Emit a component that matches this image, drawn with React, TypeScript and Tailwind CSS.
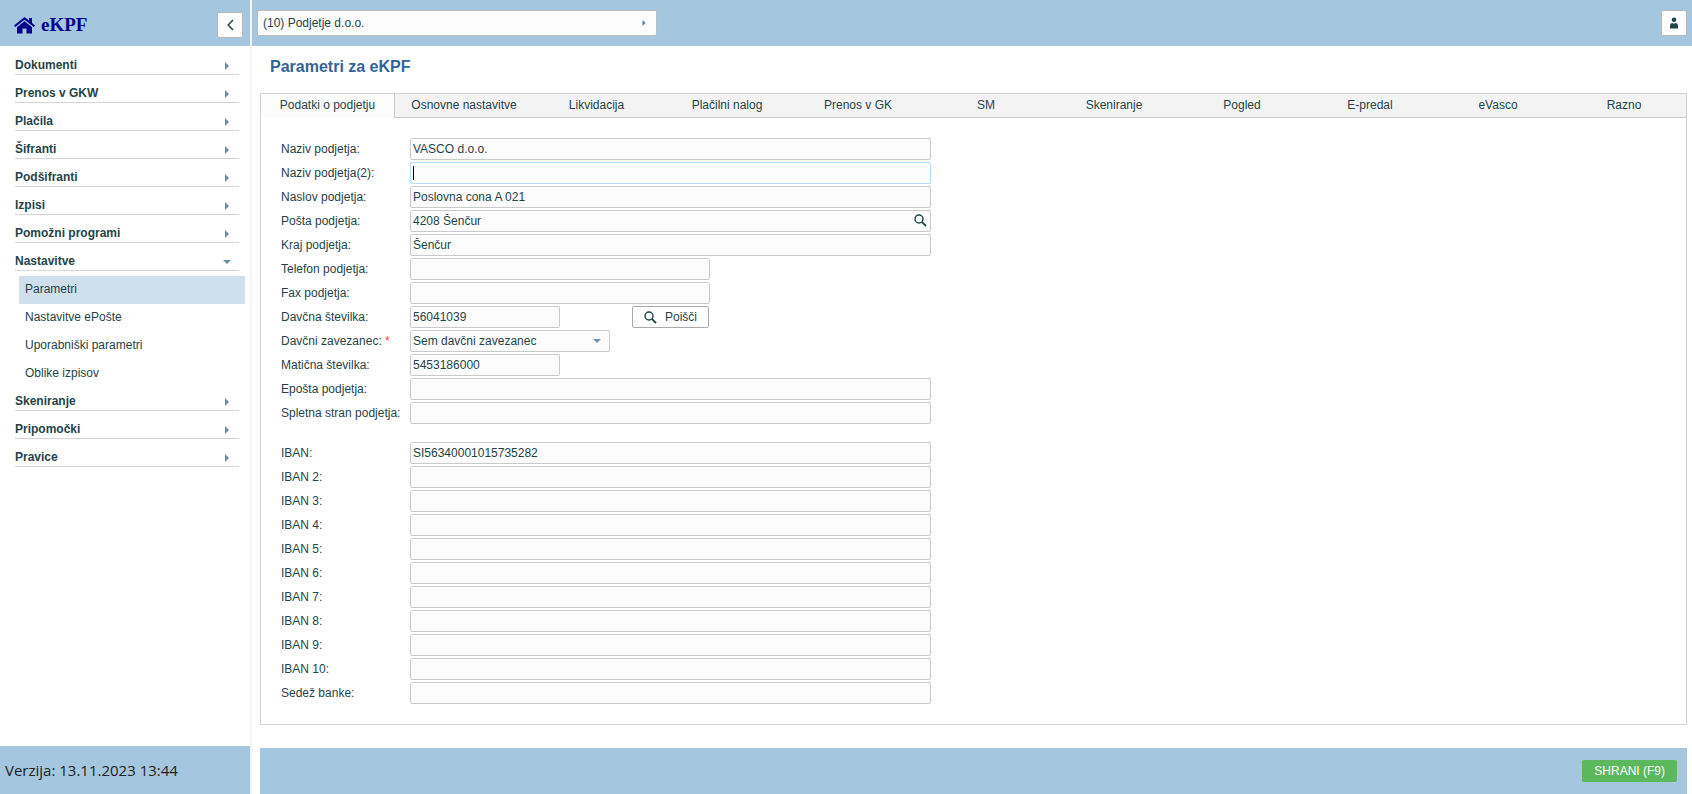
import { type ReactNode } from 'react';

type MenuItem = { label: string; children?: string[] };

const menu: MenuItem[] = [
  { label: 'Dokumenti' },
  { label: 'Prenos v GKW' },
  { label: 'Plačila' },
  { label: 'Šifranti' },
  { label: 'Podšifranti' },
  { label: 'Izpisi' },
  { label: 'Pomožni programi' },
  {
    label: 'Nastavitve',
    children: ['Parametri', 'Nastavitve ePošte', 'Uporabniški parametri', 'Oblike izpisov'],
  },
  { label: 'Skeniranje' },
  { label: 'Pripomočki' },
  { label: 'Pravice' },
];

const tabs = [
  'Podatki o podjetju',
  'Osnovne nastavitve',
  'Likvidacija',
  'Plačilni nalog',
  'Prenos v GK',
  'SM',
  'Skeniranje',
  'Pogled',
  'E-predal',
  'eVasco',
  'Razno',
];

const ibans = [2, 3, 4, 5, 6, 7, 8, 9, 10];

function HomeIcon() {
  return (
    <svg width="21" height="17" viewBox="0 0 21 17" fill="currentColor" aria-hidden="true">
      <path d="M10.5 0 L15 3.6 V1 H18 V6 L21 8.5 L19.7 10 L10.5 2.7 L1.3 10 L0 8.5 Z" />
      <path d="M10.5 4.2 L18 10.2 V16.5 H12.5 V11.5 H8.5 V16.5 H3 V10.2 Z" />
    </svg>
  );
}

function CaretRight({ className = '' }: { className?: string }) {
  return (
    <svg className={className} width="4" height="8" viewBox="0 0 4 8" aria-hidden="true">
      <path d="M0 0 L4 4 L0 8 Z" fill="currentColor" />
    </svg>
  );
}

function CaretDown({ className = '' }: { className?: string }) {
  return (
    <svg className={className} width="8" height="4" viewBox="0 0 8 4" aria-hidden="true">
      <path d="M0 0 H8 L4 4 Z" fill="currentColor" />
    </svg>
  );
}

function SearchIcon() {
  return (
    <svg width="13" height="13" viewBox="0 0 13 13" fill="none" stroke="currentColor" aria-hidden="true">
      <circle cx="5" cy="5" r="4" strokeWidth="1.4" />
      <path d="M7.8 7.8 L12 12" strokeWidth="1.8" />
    </svg>
  );
}

function UserIcon() {
  return (
    <svg width="8" height="12" viewBox="0 0 8 12" fill="currentColor" aria-hidden="true">
      <circle cx="4" cy="2.7" r="2.3" />
      <path d="M0 11.5 V9 C0 7 1 5.9 2.3 5.9 C2.8 6.4 3.3 6.6 4 6.6 C4.7 6.6 5.2 6.4 5.7 5.9 C7 5.9 8 7 8 9 V11.5 Z" />
    </svg>
  );
}

function Row({ id, label, required, children }: { id: string; label: string; required?: boolean; children: ReactNode }) {
  return (
    <div className="flex items-center">
      <label htmlFor={id} className="w-[129px] shrink-0 whitespace-nowrap leading-[22px]">
        {label}
        {required && <span className="text-[#e04848]"> *</span>}
      </label>
      {children}
    </div>
  );
}

const box =
  'h-[22px] rounded-xs border border-[#c9caca] bg-[#fcfcfc] px-[2px] outline-none focus:border-[#b4dcfb]';

function TextRow({
  id,
  label,
  value = '',
  width = 'w-[521px]',
}: {
  id: string;
  label: string;
  value?: string;
  width?: string;
}) {
  return (
    <Row id={id} label={label}>
      <input id={id} type="text" defaultValue={value} className={`${box} ${width}`} />
    </Row>
  );
}

function Sidebar() {
  return (
    <aside className="flex w-[250px] shrink-0 flex-col">
      <header className="flex h-[46px] items-center justify-between bg-[#a4c7df] pr-[7px] pl-[14px]">
        <a href="#" className="flex items-center gap-[6px] pt-1 text-[#00008b]">
          <HomeIcon />
          <span className="font-['Liberation_Serif',serif] text-[19px] leading-6 font-bold">eKPF</span>
        </a>
        <button
          type="button"
          aria-label="Skrij meni"
          className="mt-1 flex size-[26px] items-center justify-center rounded-xs border border-[#b9b9b9] bg-white"
        >
          <svg width="7" height="12" viewBox="0 0 7 12" fill="none" stroke="currentColor" strokeWidth="1.5" aria-hidden="true">
            <path d="M6 1 L1.2 6 L6 11" />
          </svg>
        </button>
      </header>

      <nav className="flex-1 pt-1.5">
        <ul>
          {menu.map((item) => (
            <li key={item.label}>
              <button
                type="button"
                aria-expanded={item.children ? true : false}
                className="mb-[5px] ml-[15px] flex w-[224px] items-center justify-between border-b border-[#d5d5d5] pt-[5px] text-left leading-[17px] font-bold"
              >
                {item.label}
                <span className="mr-[4px] flex w-[16px] justify-center pt-px text-[#6a8da8]">
                  {item.children ? <CaretDown /> : <CaretRight />}
                </span>
              </button>
              {item.children && (
                <ul>
                  {item.children.map((child, i) => (
                    <li key={child}>
                      <a
                        href="#"
                        className={`mr-[5px] ml-[19px] block h-7 pl-[6px] leading-[26px] ${i === 0 ? 'bg-[#cfdfec]' : ''}`}
                      >
                        {child}
                      </a>
                    </li>
                  ))}
                </ul>
              )}
            </li>
          ))}
        </ul>
      </nav>

      <footer className="flex h-12 items-center bg-[#a4c7df] px-[5px] font-['Open_Sans','Noto_Sans',sans-serif] text-[15px] text-[#222222]">
        Verzija: 13.11.2023 13:44
      </footer>
    </aside>
  );
}

export default function App() {
  return (
    <div className="flex min-h-screen bg-white font-['Liberation_Sans',Arial,sans-serif] text-xs text-[#1f4449]">
      <Sidebar />

      <div className="flex min-w-0 flex-1 flex-col border-l-2 border-[#f5f5f5]">
        <header className="flex h-[46px] items-center justify-between bg-[#a4c7df] px-[5px]">
          <button
            type="button"
            className="flex h-[26px] w-[400px] items-center justify-between rounded-xs border border-[#bdbdbd] bg-[#fcfcfc] pr-[10px] pl-[5px]"
          >
            (10) Podjetje d.o.o.
            <CaretRight className="h-[6px] w-[4px] text-[#4f86a8]" />
          </button>
          <button
            type="button"
            aria-label="Uporabnik"
            className="flex size-[26px] items-center justify-center rounded-xs border border-[#b9b9b9] bg-white"
          >
            <UserIcon />
          </button>
        </header>

        <main className="flex flex-1 flex-col pr-[5px] pl-2">
          <h1 className="pt-[9px] pb-[14px] pl-[10px] text-base font-bold text-[#32649a]">Parametri za eKPF</h1>

          <section className="border border-[#d0d2d2]">
            <div role="tablist" className="grid h-6 grid-cols-[134fr_138fr_127fr_134fr_repeat(6,128fr)_124fr]">
              {tabs.map((tab, i) => (
                <button
                  key={tab}
                  type="button"
                  role="tab"
                  aria-selected={i === 0}
                  className={`whitespace-nowrap ${
                    i === 0
                      ? 'border-r border-[#c9caca] bg-[#fcfcfc] pb-[2px]'
                      : 'border-b border-[#c9caca] bg-[#f3f3f3] pb-px'
                  }`}
                >
                  {tab}
                </button>
              ))}
            </div>

            <form className="flex flex-col gap-[18px] py-5 pl-5" onSubmit={(e) => e.preventDefault()}>
              <div className="flex flex-col gap-0.5">
                <TextRow id="naziv" label="Naziv podjetja:" value="VASCO d.o.o." />
                <Row id="naziv2" label="Naziv podjetja(2):">
                  <div className="relative">
                    <input
                      id="naziv2"
                      type="text"
                      autoFocus
                      className={`${box} peer block w-[521px] placeholder-shown:caret-transparent`}
                      placeholder=" "
                    />
                    <span className="pointer-events-none absolute top-1 left-[3px] hidden h-3.5 w-px bg-black peer-focus:peer-placeholder-shown:block" />
                  </div>
                </Row>
                <TextRow id="naslov" label="Naslov podjetja:" value="Poslovna cona A 021" />
                <Row id="posta" label="Pošta podjetja:">
                  <div className="relative">
                    <input id="posta" type="text" defaultValue="4208 Šenčur" className={`${box} block w-[521px]`} />
                    <button type="button" aria-label="Poišči pošto" className="absolute top-1 right-1">
                      <SearchIcon />
                    </button>
                  </div>
                </Row>
                <TextRow id="kraj" label="Kraj podjetja:" value="Šenčur" />
                <TextRow id="telefon" label="Telefon podjetja:" width="w-[300px]" />
                <TextRow id="fax" label="Fax podjetja:" width="w-[300px]" />
                <Row id="davcna" label="Davčna številka:">
                  <input id="davcna" type="text" defaultValue="56041039" className={`${box} w-[150px]`} />
                  <button
                    type="button"
                    className="ml-18 flex h-[22px] w-[77px] items-center justify-center gap-2 rounded-xs border border-[#a9abab] bg-white"
                  >
                    <SearchIcon />
                    Poišči
                  </button>
                </Row>
                <Row id="zavezanec" label="Davčni zavezanec:" required>
                  <div className="relative">
                    <select id="zavezanec" className={`${box} block w-[200px] appearance-none`}>
                      <option>Sem davčni zavezanec</option>
                    </select>
                    <CaretDown className="pointer-events-none absolute top-[9px] right-[9px] text-[#6f93b3]" />
                  </div>
                </Row>
                <TextRow id="maticna" label="Matična številka:" value="5453186000" width="w-[150px]" />
                <TextRow id="eposta" label="Epošta podjetja:" />
                <TextRow id="splet" label="Spletna stran podjetja:" />
              </div>

              <div className="flex flex-col gap-0.5">
                <TextRow id="iban" label="IBAN:" value="SI56340001015735282" />
                {ibans.map((n) => (
                  <TextRow key={n} id={`iban${n}`} label={`IBAN ${n}:`} />
                ))}
                <TextRow id="sedez" label="Sedež banke:" />
              </div>
            </form>
          </section>

          <footer className="mt-auto flex h-[46px] items-center justify-end bg-[#a4c7df] px-[10px]">
            <button type="button" className="h-[22px] rounded-xs bg-[#5cb85c] px-3 text-white">
              SHRANI (F9)
            </button>
          </footer>
        </main>
      </div>
    </div>
  );
}
